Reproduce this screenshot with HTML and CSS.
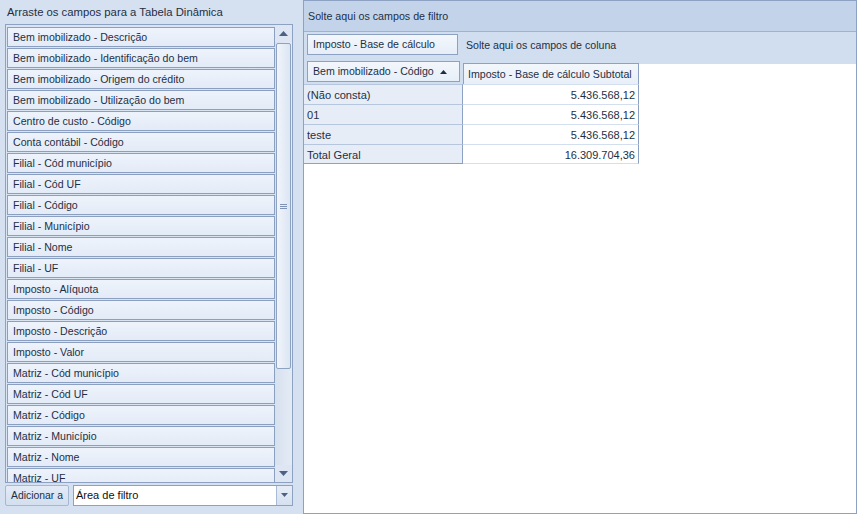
FILE: index.html
```html
<!DOCTYPE html>
<html lang="pt">
<head>
<meta charset="utf-8">
<link rel="stylesheet" href="styles.css">
</head>
<body>
<div class="app">
  <div class="left">
    <div class="left-title">Arraste os campos para a Tabela Dinâmica</div>
    <div class="list">
      <div class="items">
        <div class="item">Bem imobilizado - Descrição</div>
        <div class="item">Bem imobilizado - Identificação do bem</div>
        <div class="item">Bem imobilizado - Origem do crédito</div>
        <div class="item">Bem imobilizado - Utilização do bem</div>
        <div class="item">Centro de custo - Código</div>
        <div class="item">Conta contábil - Código</div>
        <div class="item">Filial - Cód município</div>
        <div class="item">Filial - Cód UF</div>
        <div class="item">Filial - Código</div>
        <div class="item">Filial - Município</div>
        <div class="item">Filial - Nome</div>
        <div class="item">Filial - UF</div>
        <div class="item">Imposto - Alíquota</div>
        <div class="item">Imposto - Código</div>
        <div class="item">Imposto - Descrição</div>
        <div class="item">Imposto - Valor</div>
        <div class="item">Matriz - Cód município</div>
        <div class="item">Matriz - Cód UF</div>
        <div class="item">Matriz - Código</div>
        <div class="item">Matriz - Município</div>
        <div class="item">Matriz - Nome</div>
        <div class="item">Matriz - UF</div>
      </div>
      <div class="vscroll">
        <div class="arrow up"><svg width="9" height="5" viewBox="0 0 9 5"><path d="M0 5 L4.5 0 L9 5 Z" fill="#4d6185"/></svg></div>
        <div class="track">
          <div class="thumb"><span class="grip"></span></div>
        </div>
        <div class="arrow down"><svg width="9" height="5" viewBox="0 0 9 5"><path d="M0 0 L4.5 5 L9 0 Z" fill="#4d6185"/></svg></div>
      </div>
    </div>
    <div class="bottom">
      <div class="btn-add">Adicionar a</div>
      <div class="combo">
        <span class="combo-text">Área de filtro</span>
        <span class="combo-btn"><svg width="7" height="4" viewBox="0 0 7 4"><path d="M0 0 L3.5 4 L7 0 Z" fill="#4d6185"/></svg></span>
      </div>
    </div>
  </div>
  <div class="pivot">
    <div class="filter-hdr">Solte aqui os campos de filtro</div>
    <div class="col-area">
      <div class="field field-data">Imposto - Base de cálculo</div>
      <span class="col-hint">Solte aqui os campos de coluna</span>
    </div>
    <div class="hdr-row">
      <div class="row-area">
        <div class="field field-row">Bem imobilizado - Código <svg class="sort" width="7" height="4" viewBox="0 0 7 4"><path d="M0 4 L3.5 0 L7 4 Z" fill="#1e2c40"/></svg></div>
      </div>
      <div class="col-hdr-wrap"><div class="col-hdr">Imposto - Base de cálculo Subtotal</div></div>
      <div class="hdr-rest"></div>
    </div>
    <div class="grid">
      <div class="rh">(Não consta)</div><div class="dc">5.436.568,12</div>
      <div class="rh">01</div><div class="dc">5.436.568,12</div>
      <div class="rh">teste</div><div class="dc">5.436.568,12</div>
      <div class="rh">Total Geral</div><div class="dc">16.309.704,36</div>
    </div>
  </div>
</div>
</body>
</html>
```

FILE: styles.css
```css
* { box-sizing: border-box; }
html, body { margin: 0; padding: 0; }
body {
  width: 857px;
  height: 514px;
  overflow: hidden;
  background: #d5e1f1;
  font-family: "Liberation Sans", Arial, sans-serif;
  font-size: 11px;
  color: #1b2a3d;
}
.app {
  display: flex;
  width: 857px;
  height: 514px;
}
.left {
  width: 303px;
  display: flex;
  flex-direction: column;
  padding: 0 10px 0 5px;
}
.left-title {
  height: 24px;
  line-height: 24px;
  padding-left: 2px;
  font-size: 11.3px;
  color: #1e2f45;
}
.list {
  height: 459px;
  border: 1px solid #8da2c2;
  display: flex;
  background: #d9e4f3;
  overflow: hidden;
}
.items {
  width: 271px;
  padding: 2px 0 0 1px;
  display: flex;
  flex-direction: column;
  gap: 1px;
  overflow: hidden;
}
.item {
  flex: none;
  height: 20px;
  width: 268px;
  border: 1px solid #8b9fc0;
  background: linear-gradient(#eef3fb, #e3ebf7);
  padding-left: 5px;
  line-height: 18px;
  font-size: 10.6px;
  color: #1e2f45;
  white-space: nowrap;
}
.vscroll {
  width: 17px;
  display: flex;
  flex-direction: column;
  background: #dde6f2;
}
.arrow {
  height: 17px;
  display: flex;
  align-items: center;
  justify-content: center;
}
.track {
  flex: 1;
  padding: 1px 1px 0 1px;
  background: linear-gradient(90deg, #d6e1ef, #e4ebf5);
}
.thumb {
  height: 326px;
  border: 1px solid #8ea3c3;
  border-radius: 2px;
  background: linear-gradient(90deg, #f1f5fb, #dbe5f3);
  display: flex;
  align-items: center;
  justify-content: center;
}
.grip {
  width: 7px;
  height: 5px;
  border-top: 1px solid #7d92b4;
  border-bottom: 1px solid #7d92b4;
}
.grip::after {
  content: "";
  display: block;
  height: 1px;
  margin-top: 1px;
  background: #7d92b4;
}
.bottom {
  margin-top: 1px;
  display: flex;
  gap: 4px;
  height: 22px;
  align-items: center;
}
.btn-add {
  width: 64px;
  height: 21px;
  border: 1px solid #a5b8d3;
  border-radius: 2px;
  background: linear-gradient(#e3ebf6, #d3dfef);
  line-height: 19px;
  text-align: center;
  font-size: 10.4px;
  color: #1e2f45;
}
.combo {
  flex: 1;
  height: 21px;
  border: 1px solid #8da2c2;
  background: #fff;
  display: flex;
}
.combo-text {
  flex: 1;
  padding-left: 2px;
  line-height: 19px;
  font-size: 11px;
  color: #111;
}
.combo-btn {
  width: 16px;
  border-left: 1px solid #a9bad3;
  background: linear-gradient(#e6edf7, #d6e1ef);
  display: flex;
  align-items: center;
  justify-content: center;
}
.pivot {
  width: 554px;
  height: 514px;
  border: 1px solid #8da2c2;
  background: #fff;
  display: flex;
  flex-direction: column;
}
.filter-hdr {
  height: 31px;
  background: #c3d4ea;
  border-bottom: 1px solid #9fb3d1;
  padding-left: 4px;
  line-height: 30px;
  font-size: 10.7px;
  color: #1e2f45;
}
.col-area {
  height: 29px;
  background: #d1deef;
  display: flex;
  align-items: flex-start;
  padding: 2px 0 0 3px;
}
.field {
  height: 21px;
  border: 1px solid #8da2c2;
  background: linear-gradient(#f3f7fc, #e6eef8);
  line-height: 19px;
  padding-left: 5px;
  font-size: 10.6px;
  color: #1e2f45;
  white-space: nowrap;
}
.field-data { width: 151px; }
.col-hint {
  margin-left: 8px;
  margin-top: 5px;
  font-size: 10.6px;
  color: #1e2f45;
}
.hdr-row {
  display: flex;
  height: 23px;
}
.row-area {
  width: 159px;
  background: #d1deef;
  padding-left: 3px;
}
.field-row {
  width: 153px;
  display: flex;
  align-items: center;
  gap: 6px;
}
.sort { flex: none; }
.col-hdr-wrap {
  width: 176px;
  background: #d1deef;
  padding-top: 2px;
}
.col-hdr {
  height: 21px;
  border: 1px solid #8da2c2;
  border-bottom: none;
  background: linear-gradient(#f3f7fc, #e8eff8);
  line-height: 20px;
  padding-left: 4px;
  font-size: 10.6px;
  color: #1e2f45;
  white-space: nowrap;
}
.hdr-rest {
  flex: 1;
  background: linear-gradient(#d1deef 3px, #fff 3px);
}
.grid {
  display: grid;
  grid-template-columns: 159px 176px;
  grid-auto-rows: 20px;
}
.rh {
  background: #e6edf7;
  border-top: 1px solid #b6c6de;
  border-right: 1px solid #8da2c2;
  padding: 1px 0 0 3px;
  line-height: 18px;
  font-size: 11.1px;
  color: #1e2f45;
}
.dc {
  border-top: 1px solid #d3deee;
  border-right: 1px solid #8da2c2;
  text-align: right;
  padding: 1px 3px 0 0;
  line-height: 18px;
  font-size: 11px;
  color: #1e2f45;
}
.grid .rh:nth-last-child(2) { border-bottom: 1px solid #8da2c2; }
.grid .dc:last-child { border-bottom: 1px solid #d3deee; }
```
